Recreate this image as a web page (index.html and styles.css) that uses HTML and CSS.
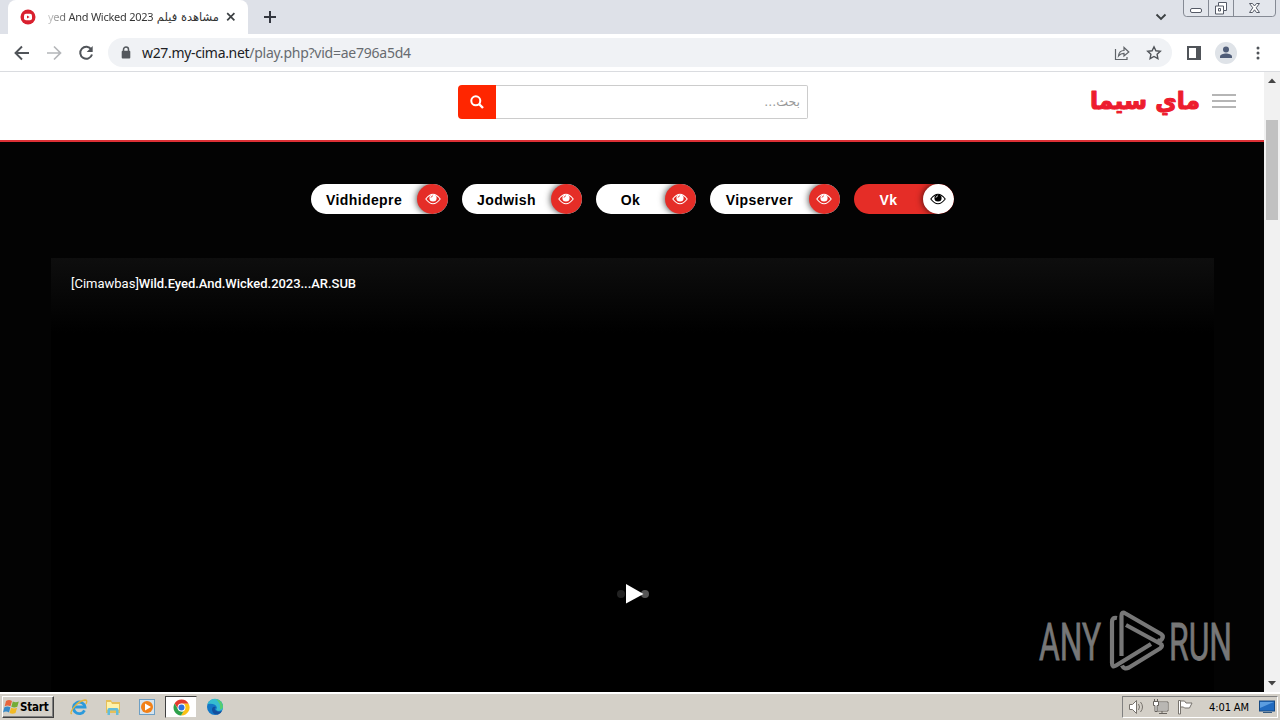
FILE: index.html
```
<!DOCTYPE html>
<html lang="ar">
<head>
    <meta charset="utf-8">
    <title>مشاهدة فيلم</title>
    <link rel="stylesheet" href="styles.css">
</head>
<body>
    <div class="tab-strip">
        <div class="tab">
            <svg class="favicon" width="16" height="16" viewBox="0 0 16 16"><circle cx="8" cy="8" r="7.5" fill="#d9202e"/><rect x="4" y="4.7" width="8" height="6.6" rx="2" fill="#fff"/><path d="M7 6.4v3.2L9.6 8z" fill="#d9202e"/></svg>
            <div class="tab-title"><span class="tab-en">yed And Wicked 2023</span><span class="tab-ar">مشاهدة فيلم</span></div>
            <svg class="tab-close" width="10" height="10" viewBox="0 0 10 10"><path d="M1.2 1.2l7.2 7.2M8.4 1.2L1.2 8.4" stroke="#3c4043" stroke-width="1.7"/></svg>
        </div>
        <svg class="new-tab" width="14" height="14" viewBox="0 0 14 14"><path d="M7 1v12M1 7h12" stroke="#33363f" stroke-width="2"/></svg>
        <svg class="tab-search" width="12" height="8" viewBox="0 0 12 8"><path d="M1.5 1.5L6 6l4.500-4.500" fill="none" stroke="#3c4043" stroke-width="1.900"/></svg>
        <svg class="window-buttons" width="94" height="18" viewBox="0 0 94 18">
            <path d="M.5 0v13q0 3.500 3 3.500h86q3 0 3-3.500V0M25.500 0v16M50.500 0v16" fill="#e3e6ec" stroke="#858a94"/>
            <rect x="7.500" y="8.500" width="11" height="4" rx="1.500" fill="#fff" stroke="#555a66"/>
            <path d="M35.500 2.500h8v8h-3v3.500h-8V6h3z" fill="#fff" stroke="#555a66"/><path d="M35.500 6h5v4.500M35.500 8.500h2v2.500h-2z" fill="none" stroke="#555a66"/>
            <path d="M66.500 3.500h3l2 2.500 2-2.500h3l-3.300 4.300 3.300 4.700h-3l-2-2.700-2 2.700h-3l3.300-4.700z" fill="#fff" stroke="#555a66"/>
        </svg>
    </div>

    <div class="toolbar">
        <svg class="nav-icon" width="16" height="16" viewBox="0 0 16 16"><path d="M15 8H2M8 1.500L1.500 8 8 14.500" fill="none" stroke="#505459" stroke-width="1.900"/></svg>
        <svg class="nav-icon" width="16" height="16" viewBox="0 0 16 16"><path d="M1 8h13M8 1.500L14.500 8 8 14.500" fill="none" stroke="#b4b6b9" stroke-width="1.700"/></svg>
        <svg class="nav-icon" width="16" height="16" viewBox="0 0 16 16"><path d="M13.300 4.500A6 6 0 1 0 14 9.500" fill="none" stroke="#505459" stroke-width="2"/><path d="M14.700 1v6h-6z" fill="#505459"/></svg>
        <div class="address-bar">
            <svg class="lock" width="10" height="13" viewBox="0 0 10 13"><path d="M2.500 5V3.500a2.500 2.500 0 0 1 5 0V5" fill="none" stroke="#54585d" stroke-width="1.500"/><rect x=".7" y="4.800" width="8.600" height="7.600" rx="1" fill="#54585d"/></svg>
            <div class="url"><span class="url-host">w27.my-cima.net</span><span class="url-path">/play.php?vid=ae796a5d4</span></div>
            <svg class="share" width="16" height="16" viewBox="0 0 16 16"><path d="M1.500 4v10.500H13V12M4.500 11c.4-4 2.500-5.500 5.500-5.500V2.500L14.800 7 10 11V8.300C7.500 8.300 6 9 4.500 11z" fill="none" stroke="#5f6368" stroke-width="1.200"/></svg>
            <svg class="star" width="16" height="16" viewBox="0 0 16 16"><path d="M8 1.800l1.900 4 4.400.5-3.200 3 .8 4.400L8 11.500l-3.900 2.200.8-4.400-3.200-3 4.400-.5z" fill="none" stroke="#505459" stroke-width="1.400"/></svg>
        </div>
        <svg class="side-panel" width="14" height="14" viewBox="0 0 14 14"><rect x="1" y="1" width="12" height="12" fill="none" stroke="#505459" stroke-width="2"/><path d="M9 1h4v12H9z" fill="#505459"/></svg>
        <svg class="profile" width="22" height="22" viewBox="0 0 22 22"><circle cx="11" cy="11" r="11" fill="#dfe3e8"/><circle cx="11" cy="7.500" r="3" fill="#505d78"/><path d="M5 16v-1.500c0-2 3.500-3 6-3s6 1 6 3V16z" fill="#505d78"/></svg>
        <svg class="more" width="4" height="14" viewBox="0 0 4 14"><circle cx="2" cy="2" r="1.500" fill="#505459"/><circle cx="2" cy="7" r="1.500" fill="#505459"/><circle cx="2" cy="12" r="1.500" fill="#505459"/></svg>
    </div>

    <div class="viewport">
        <div class="page">
            <header class="site-header">
                <form class="search">
                    <button class="search-button" type="button"><svg width="14" height="14" viewBox="0 0 14 14"><circle cx="5.800" cy="5.800" r="4.500" fill="none" stroke="#fff" stroke-width="2"/><path d="M9 9l4 4" stroke="#fff" stroke-width="2.400"/></svg></button>
                    <div class="search-field" dir="rtl">بحث...</div>
                </form>
                <div class="logo" dir="rtl"><svg width="112" height="34" viewBox="0 0 112 34"><text class="logo-text" x="56" y="21.500" text-anchor="middle" textLength="110" lengthAdjust="spacingAndGlyphs">ماي سيما</text></svg></div>
                <div class="burger"><span></span><span></span><span></span></div>
            </header>

            <div class="servers">
                <a class="server"><span class="server-name">Vidhidepre</span><span class="eye"><svg width="16" height="12" viewBox="0 0 16 12"><path d="M.8 6q7.200-9.500 14.400 0-7.200 9.500-14.400 0z" fill="none" stroke="currentColor" stroke-width="1.100"/><circle cx="8" cy="5" r="3.600" fill="currentColor"/><path d="M6 4.700q.2-1.700 2-1.900" fill="none" stroke="#e52d27" stroke-width=".8"/></svg></span></a>
                <a class="server"><span class="server-name">Jodwish</span><span class="eye"><svg width="16" height="12" viewBox="0 0 16 12"><path d="M.8 6q7.200-9.500 14.400 0-7.200 9.500-14.400 0z" fill="none" stroke="currentColor" stroke-width="1.100"/><circle cx="8" cy="5" r="3.600" fill="currentColor"/><path d="M6 4.700q.2-1.700 2-1.900" fill="none" stroke="#e52d27" stroke-width=".8"/></svg></span></a>
                <a class="server"><span class="server-name">Ok</span><span class="eye"><svg width="16" height="12" viewBox="0 0 16 12"><path d="M.8 6q7.200-9.500 14.400 0-7.200 9.500-14.400 0z" fill="none" stroke="currentColor" stroke-width="1.100"/><circle cx="8" cy="5" r="3.600" fill="currentColor"/><path d="M6 4.700q.2-1.700 2-1.900" fill="none" stroke="#e52d27" stroke-width=".8"/></svg></span></a>
                <a class="server wide"><span class="server-name">Vipserver</span><span class="eye"><svg width="16" height="12" viewBox="0 0 16 12"><path d="M.8 6q7.200-9.500 14.400 0-7.200 9.500-14.400 0z" fill="none" stroke="currentColor" stroke-width="1.100"/><circle cx="8" cy="5" r="3.600" fill="currentColor"/><path d="M6 4.700q.2-1.700 2-1.900" fill="none" stroke="#e52d27" stroke-width=".8"/></svg></span></a>
                <a class="server active"><span class="server-name">Vk</span><span class="eye"><svg width="16" height="12" viewBox="0 0 16 12"><path d="M.8 6q7.200-9.500 14.400 0-7.200 9.500-14.400 0z" fill="none" stroke="currentColor" stroke-width="1.100"/><circle cx="8" cy="5" r="3.600" fill="currentColor"/><path d="M6 4.700q.2-1.700 2-1.900" fill="none" stroke="#fff" stroke-width=".8"/></svg></span></a>
            </div>

            <div class="player">
                <div class="video-title">[Cimawbas]<span>Wild.Eyed.And.Wicked.2023...AR.SUB</span></div>
                <svg class="play" width="34" height="22" viewBox="0 0 34 22"><circle cx="5" cy="11" r="4" fill="#222"/><circle cx="29" cy="11" r="4" fill="#555"/><path d="M10 1v19.500L27.500 11z" fill="#fff"/></svg>
            </div>

            <svg class="watermark" width="204" height="64" viewBox="0 0 204 64">
                <g class="mark-text">
                    <text x="1" y="51.500" textLength="62" lengthAdjust="spacingAndGlyphs">ANY</text>
                    <text x="131" y="51.500" textLength="63" lengthAdjust="spacingAndGlyphs">RUN</text>
                </g>
                <g fill="none" stroke="#777" stroke-width="4.200" stroke-linejoin="round">
                    <path d="M79 10q-5-1-5 4v41q0 5 4 2.500L113 36"/>
                    <path d="M83.500 48V8q0-5 4-2.500L123 26q3 2 1 5t-5 1"/>
                    <path d="M88 17l34 18.500q4 2 0 5L91 59.500q-5 2.500-7-2"/>
                </g>
            </svg>
        </div>
        <div class="scrollbar">
            <svg width="16" height="17" viewBox="0 0 16 17"><path d="M4 11l4-4.500 4 4.500z" fill="#444"/></svg>
            <div class="scroll-thumb"></div>
            <svg class="scroll-down" width="16" height="17" viewBox="0 0 16 17"><path d="M4 6l4 4.500L12 6z" fill="#444"/></svg>
        </div>
    </div>

    <div class="taskbar">
        <div class="start">
            <svg width="17" height="16" viewBox="0 0 17 16"><path d="M3 2q3-2 6 0L7.500 7.300q-3-1.500-5.800 0z" fill="#e7653d"/><path d="M9.800 2.500q3 1.500 6 0l-1.500 5.300q-3 1.500-6 0z" fill="#74ac35"/><path d="M1.400 8.300q3-1.500 6 0L6 13.500q-3-1.800-6 0z" fill="#378ac8"/><path d="M8.100 8.800q3 1.500 6 0L12.500 14q-3 1.500-6 0z" fill="#f2ba25"/></svg>
            <span>Start</span>
        </div>
        <div class="quick">
            <div class="task"><svg width="18" height="18" viewBox="0 0 18 18"><path d="M14.500 12.300A5.800 5.800 0 1 1 15 9H5" fill="none" stroke="#2c9adb" stroke-width="2.800"/><path d="M2 15.500C-2 17 6 3 15 2q3 0 1 4" fill="none" stroke="#e4b53c" stroke-width="1.300"/></svg></div>
            <div class="task"><svg width="18" height="18" viewBox="0 0 18 18"><path d="M2 2h5l1 2h8v11H2z" fill="#e6bf59"/><path d="M3 4h4l1 2h7v6H3z" fill="#fff2a9"/><path d="M3.500 17v-5.500q0-1.500 1.500-1.500h8q1.500 0 1.500 1.500V17H12v-4.500H6V17z" fill="#62bddb"/></svg></div>
            <div class="task"><svg width="18" height="18" viewBox="0 0 18 18"><rect x="1.500" y="1.500" width="15" height="15" fill="#d5e4ef" stroke="#6d9fc4"/><circle cx="9" cy="9" r="6" fill="#f28118"/><path d="M7 5.500v7L13 9z" fill="#fff"/></svg></div>
            <div class="task pressed"><svg width="17" height="17" viewBox="0 0 18 18"><path d="M1.700 4.700A8.500 8.500 0 0 1 16.500 5H9L5 10z" fill="#e33b2e"/><path d="M16.500 5A8.500 8.500 0 0 1 8.500 17.500L12.500 10 9 5z" fill="#fbc116"/><path d="M8.500 17.500A8.500 8.500 0 0 1 1.700 4.700L5.500 11q2 3 5.700 2z" fill="#2da14b"/><circle cx="9" cy="9" r="4.200" fill="#fff"/><circle cx="9" cy="9" r="3.200" fill="#2e71df"/></svg></div>
            <div class="task"><svg width="18" height="18" viewBox="0 0 18 18"><circle cx="9" cy="9" r="8" fill="#1377c6"/><path d="M1.500 6A8 8 0 0 1 17 9q0 4-5 4-3-1-1-3-1-5-9.500-4z" fill="#35bdd0"/><path d="M10 1.200Q16 2 17 8q0 3-3 3.500Q15 5 10 1.200z" fill="#54cd72"/><path d="M16 13q-4 2-7-1-1-2 1-3-4-1-4 3 1 5 6 4.500 3-1 4-3.500z" fill="#144f9d"/></svg></div>
        </div>
        <div class="tray">
            <svg width="17" height="16" viewBox="0 0 17 16"><path d="M1.500 5.500h3L8.500 1.500v13l-4-4h-3z" fill="#fff" stroke="#77736d"/><path d="M10.500 5q2 3 0 6M12.500 3q4 5 0 10" fill="none" stroke="#77736d"/></svg>
            <svg width="17" height="16" viewBox="0 0 17 16"><rect x="4.500" y="3.500" width="11" height="8" fill="#b9b7b3" stroke="#fff"/><path d="M4 3h12v9H4zM7 14.500h8M10 12v2" fill="none" stroke="#66625d"/><path d="M1.500 2.500h5v4h-1.500v6h-2v-6H1.500zM2.500 0v3M5.500 0v3" fill="#fff" stroke="#66625d"/></svg>
            <svg width="17" height="16" viewBox="0 0 17 16"><path d="M2.500 1.500h2V15h-2z" fill="#fff" stroke="#77736d"/><path d="M4.500 2h4l1.500 2h6l-2.500 5H8.500L7.500 8h-3z" fill="#fff" stroke="#77736d"/></svg>
            <span class="clock">4:01 AM</span>
            <svg class="desktop" width="16" height="14" viewBox="0 0 16 14"><rect x=".5" y="1" width="15" height="10" fill="#216bc0" stroke="#174a83"/><path d="M1 2h14L1 8z" fill="#5b9de0"/><path d="M4 12.500h9" stroke="#33597f"/></svg>
        </div>
    </div>
</body>
</html>
```
FILE: styles.css
```
* {
    box-sizing: border-box;
}

body {
    margin: 0;
    width: 1280px;
    height: 720px;
    overflow: hidden;
    display: flex;
    flex-direction: column;
    font-family: "Liberation Sans", Arial, sans-serif;
    background-color: #fff;
}

svg {
    display: block;
    flex: none;
}

.tab-strip {
    height: 34px;
    background-color: #dee1e8;
    display: flex;
    align-items: flex-start;
    padding-left: 8px;
}

.tab {
    width: 240px;
    height: 34px;
    background-color: #fff;
    border-radius: 8px 8px 0 0;
    display: flex;
    align-items: center;
    padding: 0 12px;
}

.tab-title {
    width: 171px;
    margin: 0 7px 0 12px;
    display: flex;
    justify-content: space-between;
    white-space: nowrap;
    color: #333;
    font-size: 12px;
    line-height: 18px;
}

.tab-en {
    font-family: "Noto Sans", sans-serif;
    font-size: 11px;
    letter-spacing: -0.25px;
    background: linear-gradient(to right, #ccc, #333 25px);
    -webkit-background-clip: text;
    color: transparent;
}

.tab-ar {
    font-family: "DejaVu Sans", sans-serif;
    font-size: 11.5px;
}

.new-tab {
    margin: 10px 0 0 15px;
}

.tab-search {
    margin: 13px 16px 0 auto;
}

.window-buttons {
    margin-right: 3px;
}

.toolbar {
    height: 38px;
    border-bottom: 1px solid #dadce0;
    display: flex;
    align-items: center;
    padding: 0 20px 0 14px;
}

.nav-icon {
    margin-right: 16px;
}

.address-bar {
    width: 1064px;
    height: 29px;
    margin-left: -2px;
    border-radius: 15px;
    background-color: #f0f2f5;
    display: flex;
    align-items: center;
    padding: 0 10px 0 13px;
}

.url {
    margin-left: 11px;
    font-family: "Noto Sans", sans-serif;
    font-size: 14px;
    white-space: nowrap;
}

.url-host {
    color: #202124;
    letter-spacing: -0.33px;
}

.url-path {
    color: #676b70;
    letter-spacing: -0.24px;
}

.share {
    margin-left: auto;
}

.star {
    margin-left: 16px;
}

.side-panel {
    margin-left: 15px;
}

.profile {
    margin-left: 14px;
}

.more {
    margin-left: auto;
}

.viewport {
    height: 620px;
    display: flex;
}

.page {
    position: relative;
    width: 1264px;
    background-color: #030303;
}

.site-header {
    height: 70px;
    background-color: #fff;
    border-bottom: 2px solid #dd3035;
    display: flex;
    align-items: flex-start;
    padding: 13px 28px 0 458px;
}

.search {
    display: flex;
    width: 350px;
    height: 34px;
}

.search-button {
    width: 38px;
    border: none;
    padding: 0 0 0 12px;
    border-radius: 4px 0 0 4px;
    background-color: #ff2600;
}

.search-field {
    flex: 1;
    border: 1px solid #ccc;
    border-left: none;
    border-radius: 0 2px 2px 0;
    padding: 0 7px;
    color: #999;
    font-family: "DejaVu Sans", sans-serif;
    font-size: 12.5px;
    line-height: 32px;
}

.logo {
    margin: 2px 11px 0 auto;
}

.logo-text {
    font-family: "DejaVu Sans", sans-serif;
    font-size: 24px;
    font-weight: bold;
    fill: #ed1c2e;
    stroke: #ed1c2e;
    stroke-width: 1.1px;
    stroke-linejoin: round;
}

.burger {
    width: 24px;
    margin-top: 9px;
    display: flex;
    flex-direction: column;
    gap: 4px;
}

.burger span {
    height: 2px;
    background-color: #b5b5b5;
}

.servers {
    display: flex;
    gap: 14px;
    padding: 42px 0 0 311px;
}

.server {
    min-width: 100px;
    height: 30px;
    border-radius: 15px;
    background-color: #fff;
    color: #000;
    display: flex;
    overflow: hidden;
}

.server-name {
    flex: 1;
    padding: 0 15px;
    text-align: center;
    font-size: 14px;
    font-weight: bold;
    letter-spacing: 0.4px;
    line-height: 32px;
}

.wide {
    min-width: 130px;
}

.eye {
    width: 31px;
    height: 30px;
    border-radius: 50%;
    background-color: #e52d27;
    color: #fff;
    display: flex;
    align-items: center;
    justify-content: center;
    box-shadow: 0 0 7px rgba(0, 0, 0, 0.8);
}

.active {
    background-color: #e52d27;
    color: #fff;
}

.active .eye {
    background-color: #fff;
    color: #000;
}

.player {
    width: 1163px;
    height: 434px;
    margin: 44px 0 0 51px;
    background: linear-gradient(#0e0e0e, #000 75px);
    display: flex;
    flex-direction: column;
}

.video-title {
    padding: 17px 20px 0;
    color: #fff;
    font-family: Roboto, sans-serif;
    font-size: 13px;
    line-height: 18px;
}

.video-title span {
    font-weight: 500;
    letter-spacing: -0.04px;
}

.play {
    margin: 290px 0 0 565px;
}

.watermark {
    position: absolute;
    left: 1038px;
    top: 536px;
}

.mark-text {
    font-family: Roboto, sans-serif;
    font-size: 52px;
    fill: #777;
    stroke: #777;
    stroke-width: 0.8px;
}

.scrollbar {
    width: 16px;
    background-color: #f1f1f1;
    display: flex;
    flex-direction: column;
}

.scroll-thumb {
    width: 12px;
    height: 100px;
    margin: 31px 2px 0;
    background-color: #c1c1c1;
}

.scroll-down {
    margin-top: auto;
}

.taskbar {
    height: 28px;
    background-color: #d4d0c8;
    box-shadow: inset 0 2px #fff;
    display: flex;
    align-items: flex-start;
    padding: 4px 2px 0;
}

.start {
    width: 52px;
    height: 22px;
    border: 1px solid;
    border-color: #fff #404040 #404040 #fff;
    box-shadow: inset -1px -1px #808080;
    display: flex;
    align-items: center;
    font-family: "DejaVu Sans Condensed", "DejaVu Sans", sans-serif;
    font-size: 11.5px;
    font-weight: bold;
    letter-spacing: -0.2px;
}

.quick {
    display: flex;
    gap: 2px;
    margin-left: 9px;
}

.task {
    width: 32px;
    height: 22px;
    display: flex;
    align-items: center;
    justify-content: center;
}

.pressed {
    background-color: #fff;
    border: 1px solid;
    border-color: #404040 #d4d0c8 #d4d0c8 #404040;
}

.tray {
    width: 156px;
    height: 22px;
    margin-left: auto;
    border: 1px solid;
    border-color: #808080 #fff #fff #808080;
    display: flex;
    align-items: center;
    gap: 7px;
    padding-left: 5px;
}

.clock {
    margin-left: 9px;
    width: 43px;
    font-family: "DejaVu Sans Condensed", "DejaVu Sans", sans-serif;
    font-size: 11px;
    letter-spacing: -0.1px;
    white-space: nowrap;
}
```
